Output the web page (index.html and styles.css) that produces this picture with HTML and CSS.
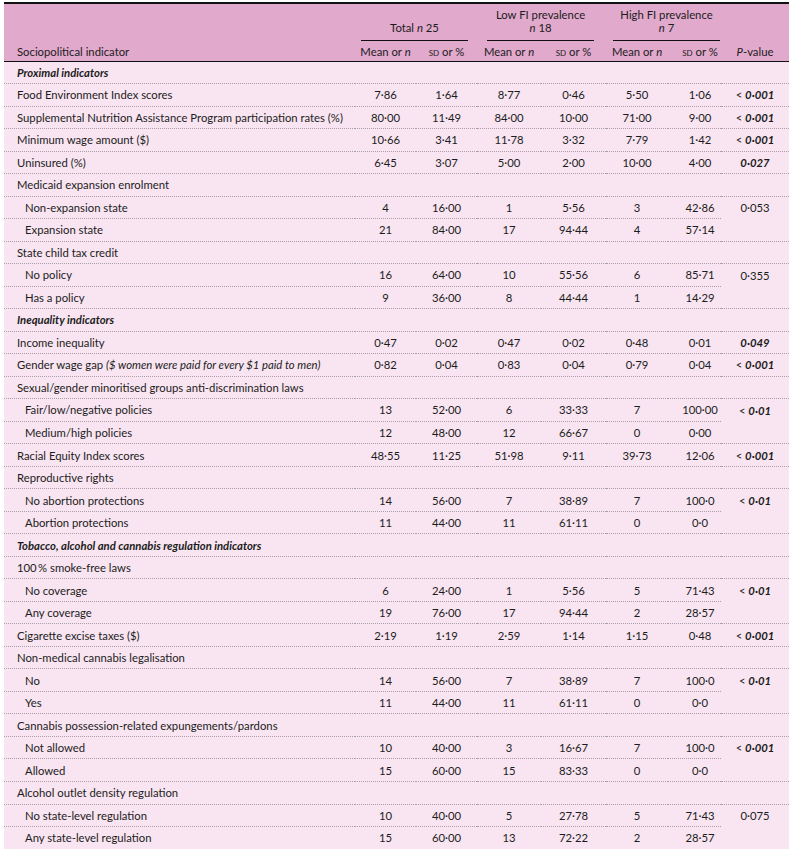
FILE: index.html
```html
<!DOCTYPE html>
<html lang="en">
<head>
    <meta charset="UTF-8">
    <meta name="viewport" content="width=device-width, initial-scale=1.0">
    <title>Sociopolitical indicators by FI prevalence</title>
    <link rel="stylesheet" href="styles.css">
</head>
<body>
    <table class="data-table">
        <colgroup>
            <col class="c-label">
            <col class="c-num2">
            <col class="c-num3">
            <col class="c-num4">
            <col class="c-num5">
            <col class="c-num6">
            <col class="c-num7">
            <col class="c-p">
        </colgroup>
        <thead>
            <tr class="head-top">
                <th></th>
                <th colspan="2"><div class="group g-total">Total <i>n</i> 25</div></th>
                <th colspan="2"><div class="group g-low">Low FI prevalence<br><i>n</i> 18</div></th>
                <th colspan="2"><div class="group g-high">High FI prevalence<br><i>n</i> 7</div></th>
                <th></th>
            </tr>
            <tr class="head-sub">
                <th class="label">Sociopolitical indicator</th>
                <th>Mean or <i>n</i></th>
                <th><span class="sc">sd</span> or %</th>
                <th>Mean or <i>n</i></th>
                <th><span class="sc">sd</span> or %</th>
                <th>Mean or <i>n</i></th>
                <th><span class="sc">sd</span> or %</th>
                <th><i>P</i>-value</th>
            </tr>
        </thead>
        <tbody>
            <tr class="section"><td colspan="8">Proximal indicators</td></tr>
            <tr><td>Food Environment Index scores</td><td>7·86</td><td>1·64</td><td>8·77</td><td>0·46</td><td>5·50</td><td>1·06</td><td>&lt; <b>0·001</b></td></tr>
            <tr><td>Supplemental Nutrition Assistance Program participation rates (%)</td><td>80·00</td><td>11·49</td><td>84·00</td><td>10·00</td><td>71·00</td><td>9·00</td><td>&lt; <b>0·001</b></td></tr>
            <tr><td>Minimum wage amount ($)</td><td>10·66</td><td>3·41</td><td>11·78</td><td>3·32</td><td>7·79</td><td>1·42</td><td>&lt; <b>0·001</b></td></tr>
            <tr><td>Uninsured (%)</td><td>6·45</td><td>3·07</td><td>5·00</td><td>2·00</td><td>10·00</td><td>4·00</td><td><b>0·027</b></td></tr>
            <tr class="group-row"><td colspan="8">Medicaid expansion enrolment</td></tr>
            <tr class="sub"><td>Non-expansion state</td><td>4</td><td>16·00</td><td>1</td><td>5·56</td><td>3</td><td>42·86</td><td class="joined">0·053</td></tr>
            <tr class="sub"><td>Expansion state</td><td>21</td><td>84·00</td><td>17</td><td>94·44</td><td>4</td><td>57·14</td><td></td></tr>
            <tr class="group-row"><td colspan="8">State child tax credit</td></tr>
            <tr class="sub"><td>No policy</td><td>16</td><td>64·00</td><td>10</td><td>55·56</td><td>6</td><td>85·71</td><td class="joined">0·355</td></tr>
            <tr class="sub"><td>Has a policy</td><td>9</td><td>36·00</td><td>8</td><td>44·44</td><td>1</td><td>14·29</td><td></td></tr>
            <tr class="section"><td colspan="8">Inequality indicators</td></tr>
            <tr><td>Income inequality</td><td>0·47</td><td>0·02</td><td>0·47</td><td>0·02</td><td>0·48</td><td>0·01</td><td><b>0·049</b></td></tr>
            <tr><td>Gender wage gap <i>($ women were paid for every $1 paid to men)</i></td><td>0·82</td><td>0·04</td><td>0·83</td><td>0·04</td><td>0·79</td><td>0·04</td><td>&lt; <b>0·001</b></td></tr>
            <tr class="group-row"><td colspan="8">Sexual/gender minoritised groups anti-discrimination laws</td></tr>
            <tr class="sub"><td>Fair/low/negative policies</td><td>13</td><td>52·00</td><td>6</td><td>33·33</td><td>7</td><td>100·00</td><td class="joined">&lt; <b>0·01</b></td></tr>
            <tr class="sub"><td>Medium/high policies</td><td>12</td><td>48·00</td><td>12</td><td>66·67</td><td>0</td><td>0·00</td><td></td></tr>
            <tr><td>Racial Equity Index scores</td><td>48·55</td><td>11·25</td><td>51·98</td><td>9·11</td><td>39·73</td><td>12·06</td><td>&lt; <b>0·001</b></td></tr>
            <tr class="group-row"><td colspan="8">Reproductive rights</td></tr>
            <tr class="sub"><td>No abortion protections</td><td>14</td><td>56·00</td><td>7</td><td>38·89</td><td>7</td><td>100·0</td><td class="joined">&lt; <b>0·01</b></td></tr>
            <tr class="sub"><td>Abortion protections</td><td>11</td><td>44·00</td><td>11</td><td>61·11</td><td>0</td><td>0·0</td><td></td></tr>
            <tr class="section"><td colspan="8">Tobacco, alcohol and cannabis regulation indicators</td></tr>
            <tr class="group-row"><td colspan="8">100&#8201;% smoke-free laws</td></tr>
            <tr class="sub"><td>No coverage</td><td>6</td><td>24·00</td><td>1</td><td>5·56</td><td>5</td><td>71·43</td><td class="joined">&lt; <b>0·01</b></td></tr>
            <tr class="sub"><td>Any coverage</td><td>19</td><td>76·00</td><td>17</td><td>94·44</td><td>2</td><td>28·57</td><td></td></tr>
            <tr><td>Cigarette excise taxes ($)</td><td>2·19</td><td>1·19</td><td>2·59</td><td>1·14</td><td>1·15</td><td>0·48</td><td>&lt; <b>0·001</b></td></tr>
            <tr class="group-row"><td colspan="8">Non-medical cannabis legalisation</td></tr>
            <tr class="sub"><td>No</td><td>14</td><td>56·00</td><td>7</td><td>38·89</td><td>7</td><td>100·0</td><td class="joined">&lt; <b>0·01</b></td></tr>
            <tr class="sub"><td>Yes</td><td>11</td><td>44·00</td><td>11</td><td>61·11</td><td>0</td><td>0·0</td><td></td></tr>
            <tr class="group-row"><td colspan="8">Cannabis possession-related expungements/pardons</td></tr>
            <tr class="sub"><td>Not allowed</td><td>10</td><td>40·00</td><td>3</td><td>16·67</td><td>7</td><td>100·0</td><td class="joined">&lt; <b>0·001</b></td></tr>
            <tr class="sub"><td>Allowed</td><td>15</td><td>60·00</td><td>15</td><td>83·33</td><td>0</td><td>0·0</td><td></td></tr>
            <tr class="group-row"><td colspan="8">Alcohol outlet density regulation</td></tr>
            <tr class="sub"><td>No state-level regulation</td><td>10</td><td>40·00</td><td>5</td><td>27·78</td><td>5</td><td>71·43</td><td class="joined">0·075</td></tr>
            <tr class="sub"><td>Any state-level regulation</td><td>15</td><td>60·00</td><td>13</td><td>72·22</td><td>2</td><td>28·57</td><td></td></tr>
        </tbody>
    </table>
</body>
</html>
```

FILE: styles.css
```css
body {
    margin: 0;
    padding: 2px 3px 0 4px;
    background-color: #fff;
    font-family: Lato, "Open Sans", sans-serif;
    font-size: 11.3px;
    color: #1c1c1c;
}
.data-table {
    width: 785px;
    border-collapse: collapse;
    table-layout: fixed;
    background-color: #f8e5f1;
    border-top: 2px solid #111;
    border-bottom: 1.5px solid #111;
}
.c-label { width: 351px; }
.c-num2 { width: 61px; }
.c-num3 { width: 61px; }
.c-num4 { width: 64px; }
.c-num5 { width: 65px; }
.c-num6 { width: 62px; }
.c-num7 { width: 53px; }
.c-p { width: 68px; }

thead {
    background-color: #e1a9cc;
    border-bottom: 1.5px solid #111;
}
th {
    font-weight: normal;
    padding: 0;
    line-height: 13px;
    text-align: center;
}
.head-top {
    height: 38px;
}
.head-top th {
    vertical-align: bottom;
    padding-bottom: 0;
}
.group {
    border-bottom: 1px solid #111;
    padding-bottom: 6px;
}
.g-total { margin: 0 9px 0 6px; }
.g-low { margin: 0 12px 0 10px; }
.g-high { margin: 0 1px 0 7px; }
.head-sub {
    height: 20px;
}
.head-sub th {
    vertical-align: middle;
    padding-top: 1px;
}
.head-sub th:nth-child(7),
tbody td:nth-child(7) {
    padding-left: 11px;
}
th.label {
    text-align: left;
    padding-left: 13px;
}
.sc {
    font-variant: small-caps;
}

tbody tr {
    height: 22.52px;
}
td {
    padding: 0;
    line-height: 13px;
    text-align: center;
    vertical-align: middle;
    border-bottom: 1px dotted #a8a0a6;
    white-space: nowrap;
}
tbody tr:last-child td {
    border-bottom: none;
}
td:first-child {
    text-align: left;
    padding-left: 13px;
}
.sub td:first-child {
    padding-left: 21px;
}
td.joined {
    border-bottom: none;
}
td b {
    font-style: italic;
    font-weight: bold;
}
.section td {
    font-weight: bold;
    font-style: italic;
}
```
